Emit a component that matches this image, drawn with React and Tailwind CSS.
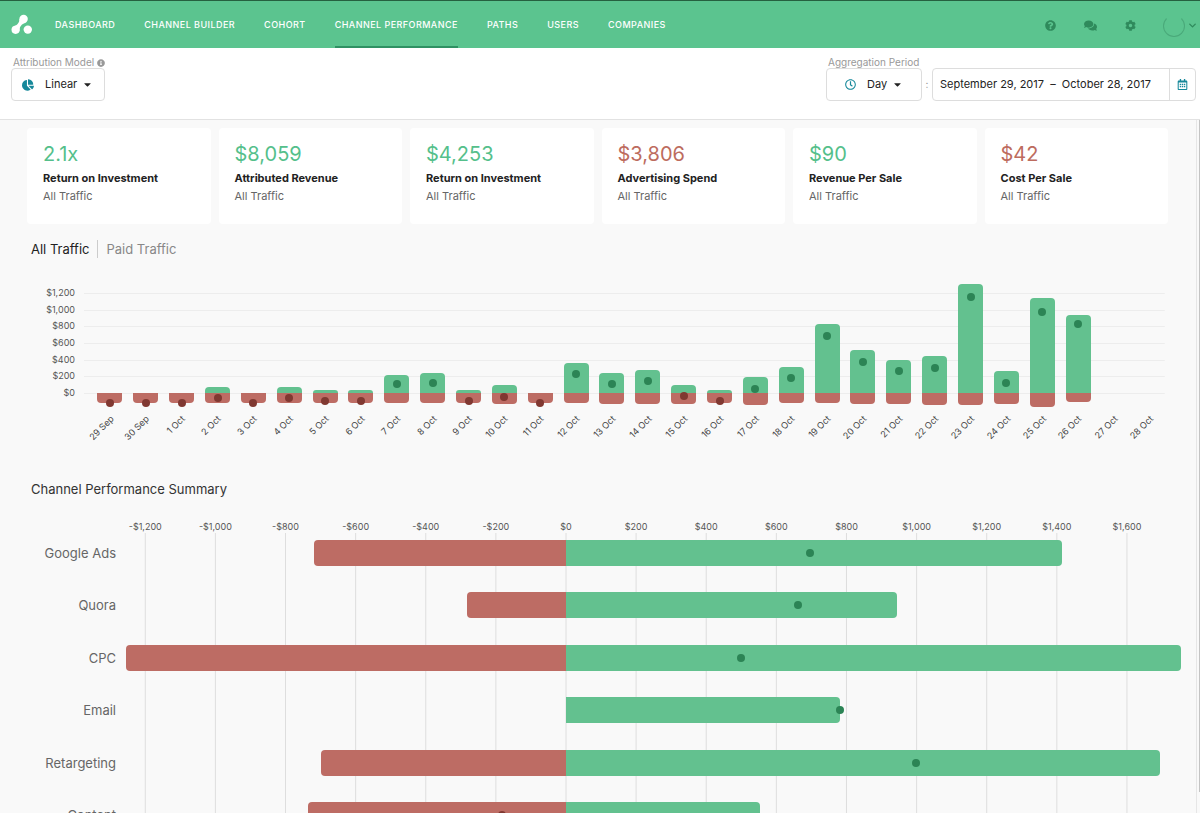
import React, { useState } from "react";
import { FaQuestionCircle, FaComments, FaCog, FaChartPie, FaRegClock, FaCaretDown, FaInfoCircle, FaRegCalendarAlt } from "react-icons/fa";
import { ChevronDown } from "lucide-react";

const navItems = ["Dashboard", "Channel Builder", "Cohort", "Channel Performance", "Paths", "Users", "Companies"];

const stats = [
    { value: "2.1x", title: "Return on Investment" },
    { value: "$8,059", title: "Attributed Revenue" },
    { value: "$4,253", title: "Return on Investment" },
    { value: "$3,806", title: "Advertising Spend", cost: true },
    { value: "$90", title: "Revenue Per Sale" },
    { value: "$42", title: "Cost Per Sale", cost: true },
];

// day, revenue, spend, profit
const days = [
    ["29 Sep", 0, 114, -116],
    ["30 Sep", 0, 114, -114],
    ["1 Oct", 0, 114, -114],
    ["2 Oct", 68, 116, -60],
    ["3 Oct", 0, 114, -114],
    ["4 Oct", 68, 116, -60],
    ["5 Oct", 40, 122, -95],
    ["6 Oct", 40, 120, -95],
    ["7 Oct", 220, 116, 108],
    ["8 Oct", 240, 120, 116],
    ["9 Oct", 38, 120, -93],
    ["10 Oct", 96, 130, -45],
    ["11 Oct", 0, 120, -125],
    ["12 Oct", 356, 122, 228],
    ["13 Oct", 240, 130, 108],
    ["14 Oct", 280, 130, 144],
    ["15 Oct", 96, 130, -36],
    ["16 Oct", 38, 124, -93],
    ["17 Oct", 192, 144, 48],
    ["18 Oct", 308, 122, 176],
    ["19 Oct", 824, 120, 688],
    ["20 Oct", 516, 130, 376],
    ["21 Oct", 400, 130, 268],
    ["22 Oct", 440, 140, 300],
    ["23 Oct", 1308, 144, 1156],
    ["24 Oct", 268, 130, 124],
    ["25 Oct", 1144, 168, 976],
    ["26 Oct", 936, 104, 832],
    ["27 Oct", 0, 0, null],
    ["28 Oct", 0, 0, null],
];

const channels = [
    { name: "Google Ads", spend: 719, revenue: 1415, profit: 696 },
    { name: "Quora", spend: 281, revenue: 944, profit: 662 },
    { name: "CPC", spend: 1254, revenue: 1754, profit: 499 },
    { name: "Email", spend: 0, revenue: 781, profit: 781 },
    { name: "Retargeting", spend: 699, revenue: 1694, profit: 998 },
    { name: "Content", spend: 736, revenue: 553, profit: -183 },
];

const dayTicks = [1200, 1000, 800, 600, 400, 200, 0];
const channelTicks = [-1200, -1000, -800, -600, -400, -200, 0, 200, 400, 600, 800, 1000, 1200, 1400, 1600];

const MIN = -1255;
const RANGE = 3012;
const pct = (v) => (v / RANGE) * 100 + "%";
const pos = (v) => pct(v - MIN);
const px = (v) => v / 12;
const money = (v) => (v < 0 ? "-$" : "$") + Math.abs(v).toLocaleString("en-US");

function Logo() {
    return (
        <svg viewBox="0 0 22 21" className="w-[22px] h-[21px]" fill="white" aria-hidden="true">
            <circle cx="4.6" cy="15.8" r="4.1" />
            <circle cx="12.6" cy="5" r="4.2" />
            <circle cx="16.8" cy="15.6" r="4.2" />
            <path d="M8.4 4.8 C8.6 8.6 6.4 11.4 2.6 12.2 L8.5 17.2 C8 13.2 10.6 9.8 14.6 8.7 Z" />
        </svg>
    );
}

function Header() {
    return (
        <header className="flex items-center h-12 shrink-0 bg-[#5bc48f] border-t border-[#25603f] pl-[11px] pr-[2px]">
            <Logo />
            <nav className="flex self-stretch gap-[29px] ml-[22px]">
                {navItems.map((item) => (
                    <a
                        key={item}
                        href="#"
                        className={
                            "flex items-center pt-[2px] border-b-2 text-[9px] font-medium uppercase tracking-wider text-white whitespace-nowrap " +
                            (item === "Channel Performance" ? "border-[#2f9163]" : "border-transparent")
                        }
                    >
                        {item}
                    </a>
                ))}
            </nav>
            <div className="flex items-center ml-auto pt-[2px] text-[#2f8a5c]">
                <button aria-label="Help" className="w-10 flex justify-center"><FaQuestionCircle size={11} /></button>
                <button aria-label="Messages" className="w-10 flex justify-center"><FaComments size={13} /></button>
                <button aria-label="Settings" className="w-10 flex justify-center"><FaCog size={11} /></button>
                <button aria-label="Account" className="flex items-center gap-[2px] ml-[13px]">
                    <span className="size-[22px] rounded-full border border-[#4aa97a] border-t-transparent"></span>
                    <ChevronDown size={11} strokeWidth={3} />
                </button>
            </div>
        </header>
    );
}

function Filters() {
    const [model, setModel] = useState("Linear");
    const [period, setPeriod] = useState("Day");
    return (
        <div className="flex justify-between shrink-0 h-18 pt-[9px] pl-[11px] pr-1 bg-white border-b border-[#e2e2e2]">
            <div>
                <label htmlFor="model" className="flex items-center gap-[3px] h-[11px] pl-[2px] text-[10px] text-[#999]">
                    Attribution Model <FaInfoCircle size={8} />
                </label>
                <div className="relative w-[94px]">
                    <FaChartPie size={12} className="absolute left-[11px] top-[11px] text-[#16889a]" />
                    <select id="model" value={model} onChange={(e) => setModel(e.target.value)} className="appearance-none w-full h-[33px] pl-[33px] border border-[#ddd] rounded text-[11px] text-[#222]">
                        <option>Linear</option>
                        <option>First Touch</option>
                        <option>Last Touch</option>
                    </select>
                    <FaCaretDown size={11} className="absolute right-3 top-[11px] text-[#222] pointer-events-none" />
                </div>
            </div>
            <div className="flex items-end h-[44px]">
                <div>
                    <label htmlFor="period" className="flex items-center h-[11px] pl-[2px] text-[10px] text-[#999]">Aggregation Period</label>
                    <div className="relative w-[96px]">
                        <FaRegClock size={11} className="absolute left-[19px] top-[11px] text-[#16889a]" />
                        <select id="period" value={period} onChange={(e) => setPeriod(e.target.value)} className="appearance-none w-full h-[33px] pl-10 border border-[#ddd] rounded text-[11px] text-[#222]">
                            <option>Day</option>
                            <option>Week</option>
                            <option>Month</option>
                        </select>
                        <FaCaretDown size={11} className="absolute right-[19px] top-[11px] text-[#222] pointer-events-none" />
                    </div>
                </div>
                <span className="w-[10px] h-[33px] flex items-center justify-center text-[10px] text-[#999]">:</span>
                <div className="flex w-[264px] h-[33px] border border-[#ddd] rounded">
                    <input type="text" aria-label="Date range" readOnly value="September 29, 2017  –  October 28, 2017" className="flex-1 min-w-0 pl-[7px] text-[11px] text-[#222]" />
                    <button aria-label="Open calendar" className="flex items-center justify-center w-[26px] border-l border-[#ddd] text-[#16889a]"><FaRegCalendarAlt size={11} /></button>
                </div>
            </div>
        </div>
    );
}

function StatCard({ value, title, cost }) {
    return (
        <div className="h-24 px-4 pt-[14px] bg-white rounded">
            <div className={"text-[20px] leading-6 " + (cost ? "text-[#bd6c5e]" : "text-[#55bf8b]")}>{value}</div>
            <div className="mt-1 text-[11px] leading-4 font-bold text-[#222] whitespace-nowrap">{title}</div>
            <div className="mt-[2px] text-[11px] leading-4 text-[#666]">All Traffic</div>
        </div>
    );
}

function DailyChart() {
    return (
        <div className="flex mt-[27px] ml-[31px] mr-7">
            <div className="w-11 shrink-0 text-right text-[9px] text-[#555]">
                {dayTicks.map((t, i) => (
                    <div key={t} className={i % 3 === 1 ? "h-4 leading-4" : "h-[17px] leading-4"}>{money(t)}</div>
                ))}
            </div>
            <div className="relative flex-1 min-w-0 ml-[9px] pl-2">
                <svg className="absolute left-0 top-0 w-full h-[120px]" aria-hidden="true">
                    {dayTicks.map((t) => (
                        <rect key={t} x="0" y={Math.round(108 - px(t))} width="99.7%" height="1" fill="#ededed" />
                    ))}
                </svg>
                <div className="relative flex">
                    {days.map(([day, revenue, spend, profit]) => (
                        <div key={day} className="flex-1 min-w-0">
                            <div className="relative h-32 flex flex-col items-center">
                                <div className="h-[108px] shrink-0 w-full flex items-end justify-center">
                                    <div className="w-[25px] shrink-0 rounded-t bg-[#63c18f]" style={{ height: px(revenue) }}></div>
                                </div>
                                <div className="w-[25px] shrink-0 rounded-b bg-[#bd6c64]" style={{ height: px(spend) }}></div>
                                {profit !== null && (
                                    <div
                                        className={"absolute left-1/2 -ml-1 -mt-1 size-2 rounded-full " + (profit < 0 ? "bg-[#803831]" : "bg-[#2c8455]")}
                                        style={{ top: 108 - px(profit) }}
                                    ></div>
                                )}
                            </div>
                            <div className="flex justify-end h-[27px] pr-5 text-[9px] leading-3 text-[#444]">
                                <span className="shrink-0 whitespace-nowrap origin-top-right -rotate-45">{day}</span>
                            </div>
                        </div>
                    ))}
                </div>
            </div>
        </div>
    );
}

function ChannelChart() {
    return (
        <div className="flex mt-[23px] mr-[14px]">
            <div className="w-[116px] shrink-0 pt-[19px] text-right text-[13px] text-[#666]">
                {channels.map((c, i) => (
                    <div key={c.name} className={i % 2 ? "h-[53px] leading-[26px]" : "h-[52px] leading-[26px]"}>{c.name}</div>
                ))}
            </div>
            <div className="relative flex-1 min-w-0 ml-[10px] pt-[19px]">
                <svg className="absolute inset-0 size-full overflow-visible" aria-hidden="true">
                    {channelTicks.map((t) => (
                        <g key={t}>
                            <line x1={pos(t)} x2={pos(t)} y1="12" y2="100%" stroke="#dedede" />
                            <text x={pos(t)} y="9" textAnchor="middle" fontSize="9" fill="#555">{money(t)}</text>
                        </g>
                    ))}
                </svg>
                {channels.map((c, i) => (
                    <div key={c.name} className={i % 2 ? "relative h-[53px]" : "relative h-[52px]"}>
                        <div className="flex h-[26px]">
                            <div className="shrink-0" style={{ width: pos(-c.spend) }}></div>
                            <div className="shrink-0 rounded-l bg-[#bd6c64]" style={{ width: pct(c.spend) }}></div>
                            <div className="shrink-0 rounded-r bg-[#63c18f]" style={{ width: pct(c.revenue) }}></div>
                        </div>
                        <div
                            className={"absolute top-[9px] -ml-1 size-2 rounded-full " + (c.profit < 0 ? "bg-[#803831]" : "bg-[#2c8455]")}
                            style={{ left: pos(c.profit) }}
                        ></div>
                    </div>
                ))}
            </div>
        </div>
    );
}

export default function App() {
    return (
        <div className="flex flex-col h-screen overflow-hidden bg-[#f9f9f9] font-['Inter',sans-serif]">
            <Header />
            <Filters />
            <div className="flex flex-1 min-h-0">
                <main className="flex-1 min-w-0 overflow-hidden">
                    <div className="grid grid-cols-6 gap-2 mt-2 ml-[27px] mr-7">
                        {stats.map((s, i) => (
                            <StatCard key={i} {...s} />
                        ))}
                    </div>
                    <div className="flex items-center mt-4 ml-[31px] text-[13px] leading-[18px]">
                        <button className="pr-2 text-[#222] border-r border-[#ccc]">All Traffic</button>
                        <button className="pl-2 text-[#888]">Paid Traffic</button>
                    </div>
                    <DailyChart />
                    <h2 className="mt-10 ml-[31px] text-[13px] leading-[18px] text-[#333]">Channel Performance Summary</h2>
                    <ChannelChart />
                </main>
                <div className="w-1 shrink-0 border-l border-[#e6e6e6] pl-[2px] pb-[21px]">
                    <div className="h-full bg-[#c4c4c4]"></div>
                </div>
            </div>
        </div>
    );
}
